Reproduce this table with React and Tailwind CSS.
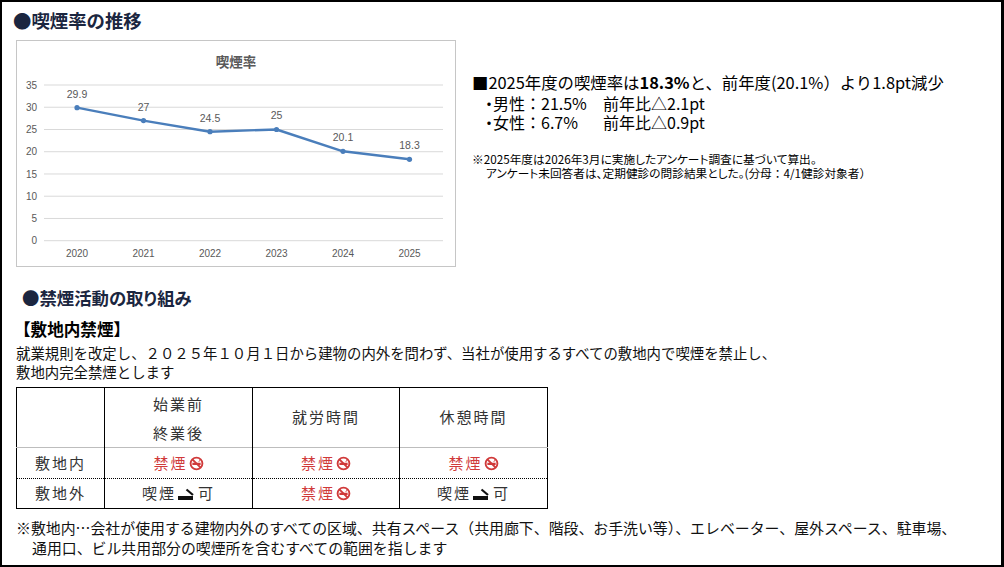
import React from 'react';

/* ---------- データ ---------- */
const RATE = [
  { y: '2020', v: 29.9 },
  { y: '2021', v: 27 },
  { y: '2022', v: 24.5 },
  { y: '2023', v: 25 },
  { y: '2024', v: 20.1 },
  { y: '2025', v: 18.3 },
];
const JP = { fontFamily: '"Noto Sans CJK JP", "Noto Sans", sans-serif' };
const PALT = { fontFeatureSettings: '"palt"' };
const NOPALT = { fontFeatureSettings: 'normal' };
const yOf = v => 199.7 - v * (155.7 / 35);
const xOf = i => 60 + i * 66.5;

const NoSmoke = () => (
  <svg width="15" height="15" viewBox="0 0 16 16" className="inline-block align-[-2px] ml-[1px]">
    <circle cx="8" cy="8" r="6.3" fill="none" stroke="#d03a3a" strokeWidth="2" />
    <rect x="3.6" y="7.2" width="8.8" height="2.4" fill="#d03a3a" />
    <path d="M10.5 6.3c0-1.4 1.6-1.2 1.4-2.8" fill="none" stroke="#d03a3a" strokeWidth="1" />
    <line x1="3.6" y1="3.6" x2="12.4" y2="12.4" stroke="#d03a3a" strokeWidth="2" />
  </svg>
);
const Smoke = () => (
  <svg width="20" height="15" viewBox="0 0 20 15" className="inline-block align-[-2px] mx-[1px]">
    <rect x="1" y="10" width="15" height="4" fill="#111" />
    <path d="M9.5 3.5 L16 9" stroke="#111" strokeWidth="2.2" fill="none" />
  </svg>
);

const Chart = () => (
  <div className="w-[440px] h-[227px] border border-[#c6c6c6] bg-white">
    <svg width="438" height="225" viewBox="0 0 438 225">
      <text x="219" y="26" textAnchor="middle" fontSize="13.5" fill="#595959" fontWeight="600"
            style={JP}>喫煙率</text>
      {[0, 5, 10, 15, 20, 25, 30, 35].map(t => (
        <g key={t}>
          <line x1="27" x2="426" y1={yOf(t)} y2={yOf(t)} stroke="#d9d9d9" strokeWidth="1" />
          <text x="20" y={yOf(t) + 3.6} textAnchor="end" fontSize="10" fill="#595959"
                fontFamily='"Liberation Sans", sans-serif'>{t}</text>
        </g>
      ))}
      {RATE.map((d, i) => (
        <text key={d.y} x={xOf(i)} y="215.5" textAnchor="middle" fontSize="10" fill="#595959"
              fontFamily='"Liberation Sans", sans-serif'>{d.y}</text>
      ))}
      <polyline fill="none" stroke="#4a7ebb" strokeWidth="2.4" strokeLinejoin="round"
                points={RATE.map((d, i) => `${xOf(i)},${yOf(d.v)}`).join(' ')} />
      {RATE.map((d, i) => (
        <g key={'p' + d.y}>
          <circle cx={xOf(i)} cy={yOf(d.v)} r="2.6" fill="#4a7ebb" />
          <text x={xOf(i)} y={yOf(d.v) - 10} textAnchor="middle" fontSize="10.5" fill="#595959"
                fontFamily='"Liberation Sans", sans-serif'>{d.v}</text>
        </g>
      ))}
    </svg>
  </div>
);

const td = 'text-center align-middle border-l-[1.5px] border-black';

export default function App() {
  return (
    <div className="w-[1004px] h-[567px] bg-black pt-[2px] pl-[2px] pr-[3px] pb-[2px]" style={JP}>
      <div className="w-full h-full bg-white text-black overflow-hidden">

        {/* 喫煙率の推移 */}
        <h2 className="pl-[11px] pt-[6px] h-[38px] text-[18.4px] leading-[24px] font-bold text-[#1b2640]">
          ●喫煙率の推移
        </h2>
        <div className="flex pl-[14px]">
          <Chart />
          <div className="pl-[16px] pt-[32px]">
            <p className="text-[16.4px] leading-[20px]">
              ■2025年度の喫煙率は<b>18.3%</b>と、前年度(20.1%）より1.8pt減少
            </p>
            <p className="pl-[13px] text-[16px] leading-[20px] mt-[1px]">
              <span className="inline-block w-[118px]"><span style={PALT}>・</span>男性：21.5%</span>前年比△2.1pt
            </p>
            <p className="pl-[13px] text-[16px] leading-[18px]">
              <span className="inline-block w-[118px]"><span style={PALT}>・</span>女性：6.7%</span>前年比△0.9pt
            </p>
            <div className="mt-[21px] text-[11.7px] leading-[14px]" style={PALT}>
              <p>※2025年度は2026年3月に実施したアンケート調査に基づいて算出。</p>
              <p className="pl-[14px]">
                アンケート未回答者は、定期健診の問診結果とした。<span style={NOPALT}>(分母：4/1健診対象者）</span>
              </p>
            </div>
          </div>
        </div>

        {/* 禁煙活動の取り組み */}
        <h2 className="pl-[20px] mt-[19px] text-[17.4px] leading-[24px] font-bold text-[#1b2640]" style={PALT}>
          ●禁煙活動の取り組み
        </h2>
        <h3 className="pl-[12px] mt-[9px] text-[16.6px] leading-[20px] font-bold">【敷地内禁煙】</h3>
        <p className="pl-[14px] mt-[4px] text-[14.4px] leading-[19px] text-[#111]">
          就業規則を改定し、２０２５年１０月１日から建物の内外を問わず、当社が使用するすべての敷地内で喫煙を禁止し、
          <br />敷地内完全禁煙とします
        </p>

        <table className="ml-[14px] mt-[6px] border-collapse border-[1.5px] border-black text-[15px] tracking-[2px] text-[#333]">
          <tbody>
            <tr className="h-[60px] border-b border-[#bdbdbd]">
              <td className="w-[88px]"></td>
              <td className={td + ' w-[148px] leading-[29px]'}>始業前<br />終業後</td>
              <td className={td + ' w-[147px]'}>就労時間</td>
              <td className={td + ' w-[148px]'}>休憩時間</td>
            </tr>
            <tr className="h-[31px] border-b border-dotted border-black">
              <td className="text-center align-middle">敷地内</td>
              <td className={td + ' text-[#d03a3a]'}>禁煙<NoSmoke /></td>
              <td className={td + ' text-[#d03a3a]'}>禁煙<NoSmoke /></td>
              <td className={td + ' text-[#d03a3a]'}>禁煙<NoSmoke /></td>
            </tr>
            <tr className="h-[30px]">
              <td className="text-center align-middle">敷地外</td>
              <td className={td}>喫煙<Smoke />可</td>
              <td className={td + ' text-[#d03a3a]'}>禁煙<NoSmoke /></td>
              <td className={td}>喫煙<Smoke />可</td>
            </tr>
          </tbody>
        </table>

        <div className="pl-[14px] mt-[9px] text-[14.9px] leading-[20px] text-[#111]">
          <p>※敷地内…会社が使用する建物内外のすべての区域、共有スペース（共用廊下、階段、お手洗い等）、エレベーター、屋外スペース、駐車場、</p>
          <p className="pl-[16px]">通用口、ビル共用部分の喫煙所を含むすべての範囲を指します</p>
        </div>
      </div>
    </div>
  );
}
